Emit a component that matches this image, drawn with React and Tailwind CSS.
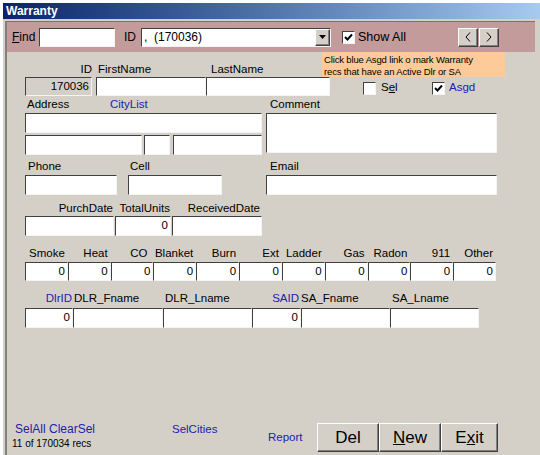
import React from "react";

const sunken =
  "border border-t-[#404040] border-l-[#404040] border-b-[#f4f4f4] border-r-[#f4f4f4]";
const raised =
  "bg-[#d4d0c8] border border-t-white border-l-white border-b-[#404040] border-r-[#404040] shadow-[inset_-1px_-1px_0_#808080]";

const Box = ({ className = "", value, gray }) => (
  <div
    className={`${sunken} ${gray ? "bg-[#d4d0c8]" : "bg-white"} flex items-center justify-end pr-[2px] leading-none ${className}`}
  >
    {value}
  </div>
);

const Check = ({ checked }) => (
  <div className={`w-[13px] h-[13px] bg-white ${sunken} flex items-center justify-center`}>
    {checked && (
      <svg width="9" height="9" viewBox="0 0 9 9">
        <path d="M1 4 L3.5 6.5 L8 1.5" stroke="#000" strokeWidth="1.9" fill="none" />
      </svg>
    )}
  </div>
);

const blue = "text-[#2020b0]";

const units = ["Smoke", "Heat", "CO", "Blanket", "Burn", "Ext", "Ladder", "Gas", "Radon", "911", "Other"];

export default function App() {
  return (
    <div className="w-[540px] h-[455px] overflow-hidden bg-white font-['Liberation_Sans',Arial,sans-serif] text-[11.5px] text-black pt-[3px] pl-[3px]">
      {/* Title bar */}
      <div className="h-[16px] bg-linear-to-r from-[#0a246a] to-[#a6caf0] flex items-center pl-[3px] text-white font-bold text-[12px]">
        Warranty
      </div>

      <div className="h-[436px] bg-[#d4d0c8] pl-[2px] pt-[2px]">
        <div className="h-full border-l-2 border-[#808080] flex flex-col">
          {/* Toolbar band */}
          <div className="w-[528px] h-[31px] shrink-0 border-t border-[#8a6a6a] bg-[#c29b9a] flex items-center pl-[5px] pr-[36px] text-[12px]">
            <span className="w-[24px]">
              <span className="underline">F</span>ind
            </span>
            <div className={`ml-[3px] w-[76px] h-[19px] bg-white ${sunken}`} />
            <span className="ml-[9px] w-[12px]">ID</span>
            <div className={`ml-[5px] w-[190px] h-[19px] bg-white ${sunken} flex items-center`}>
              <span className="flex-1 pl-[2px] whitespace-pre">,  (170036)</span>
              <div className={`${raised} w-[15px] h-[17px] flex items-center justify-center`}>
                <svg width="7" height="4" viewBox="0 0 7 4">
                  <path d="M0 0 H7 L3.5 4 Z" fill="#000" />
                </svg>
              </div>
            </div>
            <div className="ml-[11px]">
              <Check checked />
            </div>
            <span className="ml-[3px] text-[12.5px]">Show All</span>
            <div className="ml-auto flex">
              <div className={`${raised} w-[20px] h-[19px] flex items-center justify-center`}>
                <svg width="6" height="10" viewBox="0 0 6 10">
                  <path d="M5 0.5 L1 5 L5 9.5" stroke="#000" fill="none" />
                </svg>
              </div>
              <div className={`${raised} ml-[1px] w-[20px] h-[19px] flex items-center justify-center`}>
                <svg width="6" height="10" viewBox="0 0 6 10">
                  <path d="M1 0.5 L5 5 L1 9.5" stroke="#000" fill="none" />
                </svg>
              </div>
            </div>
          </div>

          {/* Form */}
          <div className="pl-[18px] flex flex-col">
            {/* Row 1 */}
            <div className="h-[25px] flex">
              <div className="flex items-end pb-[1px] leading-[14px]">
                <span className="w-[67px] text-right">ID</span>
                <span className="ml-[4px] w-[110px] pl-[2px]">FirstName</span>
                <span className="w-[116px] pl-[5px]">LastName</span>
              </div>
              <div className="w-[183px] h-[25px] bg-[#fccb99] text-[9.5px] tracking-[-0.15px] leading-[11.5px] pl-[2px] pt-[2px]">
                Click blue Asgd link o mark Warranty
                <br />
                recs that have an Active Dlr or SA
              </div>
            </div>

            {/* Row 2 */}
            <div className="h-[19px] flex items-center">
              <Box className="w-[67px] h-[19px]" value="170036" gray />
              <Box className="ml-[4px] w-[110px] h-[19px]" />
              <Box className="w-[124px] h-[19px]" />
              <div className="ml-[33px] mt-[3px] flex items-center">
                <Check />
                <span className="ml-[5px] w-[18px]">
                  S<span className="underline">e</span>l
                </span>
                <div className="ml-[33px]">
                  <Check checked />
                </div>
                <span className={`ml-[4px] ${blue}`}>Asgd</span>
              </div>
            </div>

            {/* Row 3 labels */}
            <div className="h-[17px] flex items-end pb-[2px] leading-[14px]">
              <span className="w-[85px] pl-[2px]">Address</span>
              <span className={`w-[156px] ${blue}`}>CityList</span>
              <span className="pl-[4px]">Comment</span>
            </div>

            {/* Row 4 */}
            <div className="h-[42px] flex">
              <div className="w-[237px] flex flex-col">
                <Box className="w-[237px] h-[20px]" />
                <div className="mt-[2px] flex">
                  <Box className="w-[117px] h-[20px]" />
                  <Box className="ml-[2px] w-[26px] h-[20px]" />
                  <Box className="ml-[3px] w-[89px] h-[20px]" />
                </div>
              </div>
              <Box className="ml-[4px] w-[231px] h-[40px]" />
            </div>

            {/* Row 5 labels */}
            <div className="h-[20px] flex items-end pb-[2px] leading-[14px]">
              <span className="w-[103px] pl-[3px]">Phone</span>
              <span className="w-[138px] pl-[2px]">Cell</span>
              <span className="pl-[4px]">Email</span>
            </div>

            {/* Row 6 */}
            <div className="h-[20px] flex">
              <Box className="w-[92px] h-[20px]" />
              <Box className="ml-[11px] w-[94px] h-[20px]" />
              <Box className="ml-[44px] w-[231px] h-[20px]" />
            </div>

            {/* Row 7 labels */}
            <div className="h-[21px] flex items-end pb-[1px] leading-[14px]">
              <span className="w-[89px] text-right pr-[1px]">PurchDate</span>
              <span className="ml-[1px] w-[56px] text-right pr-[1px]">TotalUnits</span>
              <span className="ml-[1px] w-[90px] text-right pr-[2px]">ReceivedDate</span>
            </div>

            {/* Row 8 */}
            <div className="h-[20px] flex">
              <Box className="w-[89px] h-[20px]" />
              <Box className="ml-[1px] w-[56px] h-[20px]" value="0" />
              <Box className="ml-[1px] w-[90px] h-[20px]" />
            </div>

            {/* Row 9 labels */}
            <div className="h-[26px] w-[471px] grid grid-cols-11 items-end pb-[2px] leading-[14px]">
              {units.map((u) => (
                <span key={u} className={`text-right ${u === "CO" ? "pr-[6px]" : "pr-[3px]"}`}>
                  {u}
                </span>
              ))}
            </div>

            {/* Row 10 */}
            <div className="h-[19px] w-[471px] grid grid-cols-11">
              {units.map((u) => (
                <Box key={u} className="h-[19px]" value="0" />
              ))}
            </div>

            {/* Row 11 labels */}
            <div className="h-[27px] flex items-end pb-[3px] leading-[14px]">
              <span className={`w-[48px] text-right pr-[1px] ${blue}`}>DlrID</span>
              <span className="w-[90px] pl-[1px]">DLR_Fname</span>
              <span className="w-[89px] pl-[2px]">DLR_Lname</span>
              <span className={`w-[49px] text-right pr-[2px] ${blue}`}>SAID</span>
              <span className="w-[89px]">SA_Fname</span>
              <span className="pl-[2px]">SA_Lname</span>
            </div>

            {/* Row 12 */}
            <div className="h-[20px] flex">
              <Box className="w-[48px] h-[20px]" value="0" />
              <Box className="w-[90px] h-[20px]" />
              <Box className="w-[89px] h-[20px]" />
              <Box className="w-[49px] h-[20px]" value="0" />
              <Box className="w-[89px] h-[20px]" />
              <Box className="w-[89px] h-[20px]" />
            </div>
          </div>

          <div className="flex-1" />

          {/* Bottom bar */}
          <div className="h-[34px] flex items-start">
            <div className="w-[165px] pl-[5px] flex flex-col">
              <span className={`mt-[1px] pl-[3px] leading-[14px] text-[12px] ${blue}`}>SelAll ClearSel</span>
              <span className="mt-[2px] leading-[12px] text-[10px]">11 of 170034 recs</span>
            </div>
            <span className={`w-[96px] mt-[1px] leading-[14px] ${blue}`}>SelCities</span>
            <span className={`w-[49px] mt-[9px] leading-[14px] ${blue}`}>Report</span>
            <div className="mt-[2px] flex text-[17px]">
              <div className={`${raised} w-[62px] h-[29px] flex items-center justify-center`}>Del</div>
              <div className={`${raised} w-[62px] h-[29px] flex items-center justify-center`}>
                <span className="underline">N</span>ew
              </div>
              <div className={`${raised} w-[57px] h-[29px] flex items-center justify-center`}>
                E<span className="underline">x</span>it
              </div>
            </div>
          </div>
        </div>
      </div>
    </div>
  );
}
